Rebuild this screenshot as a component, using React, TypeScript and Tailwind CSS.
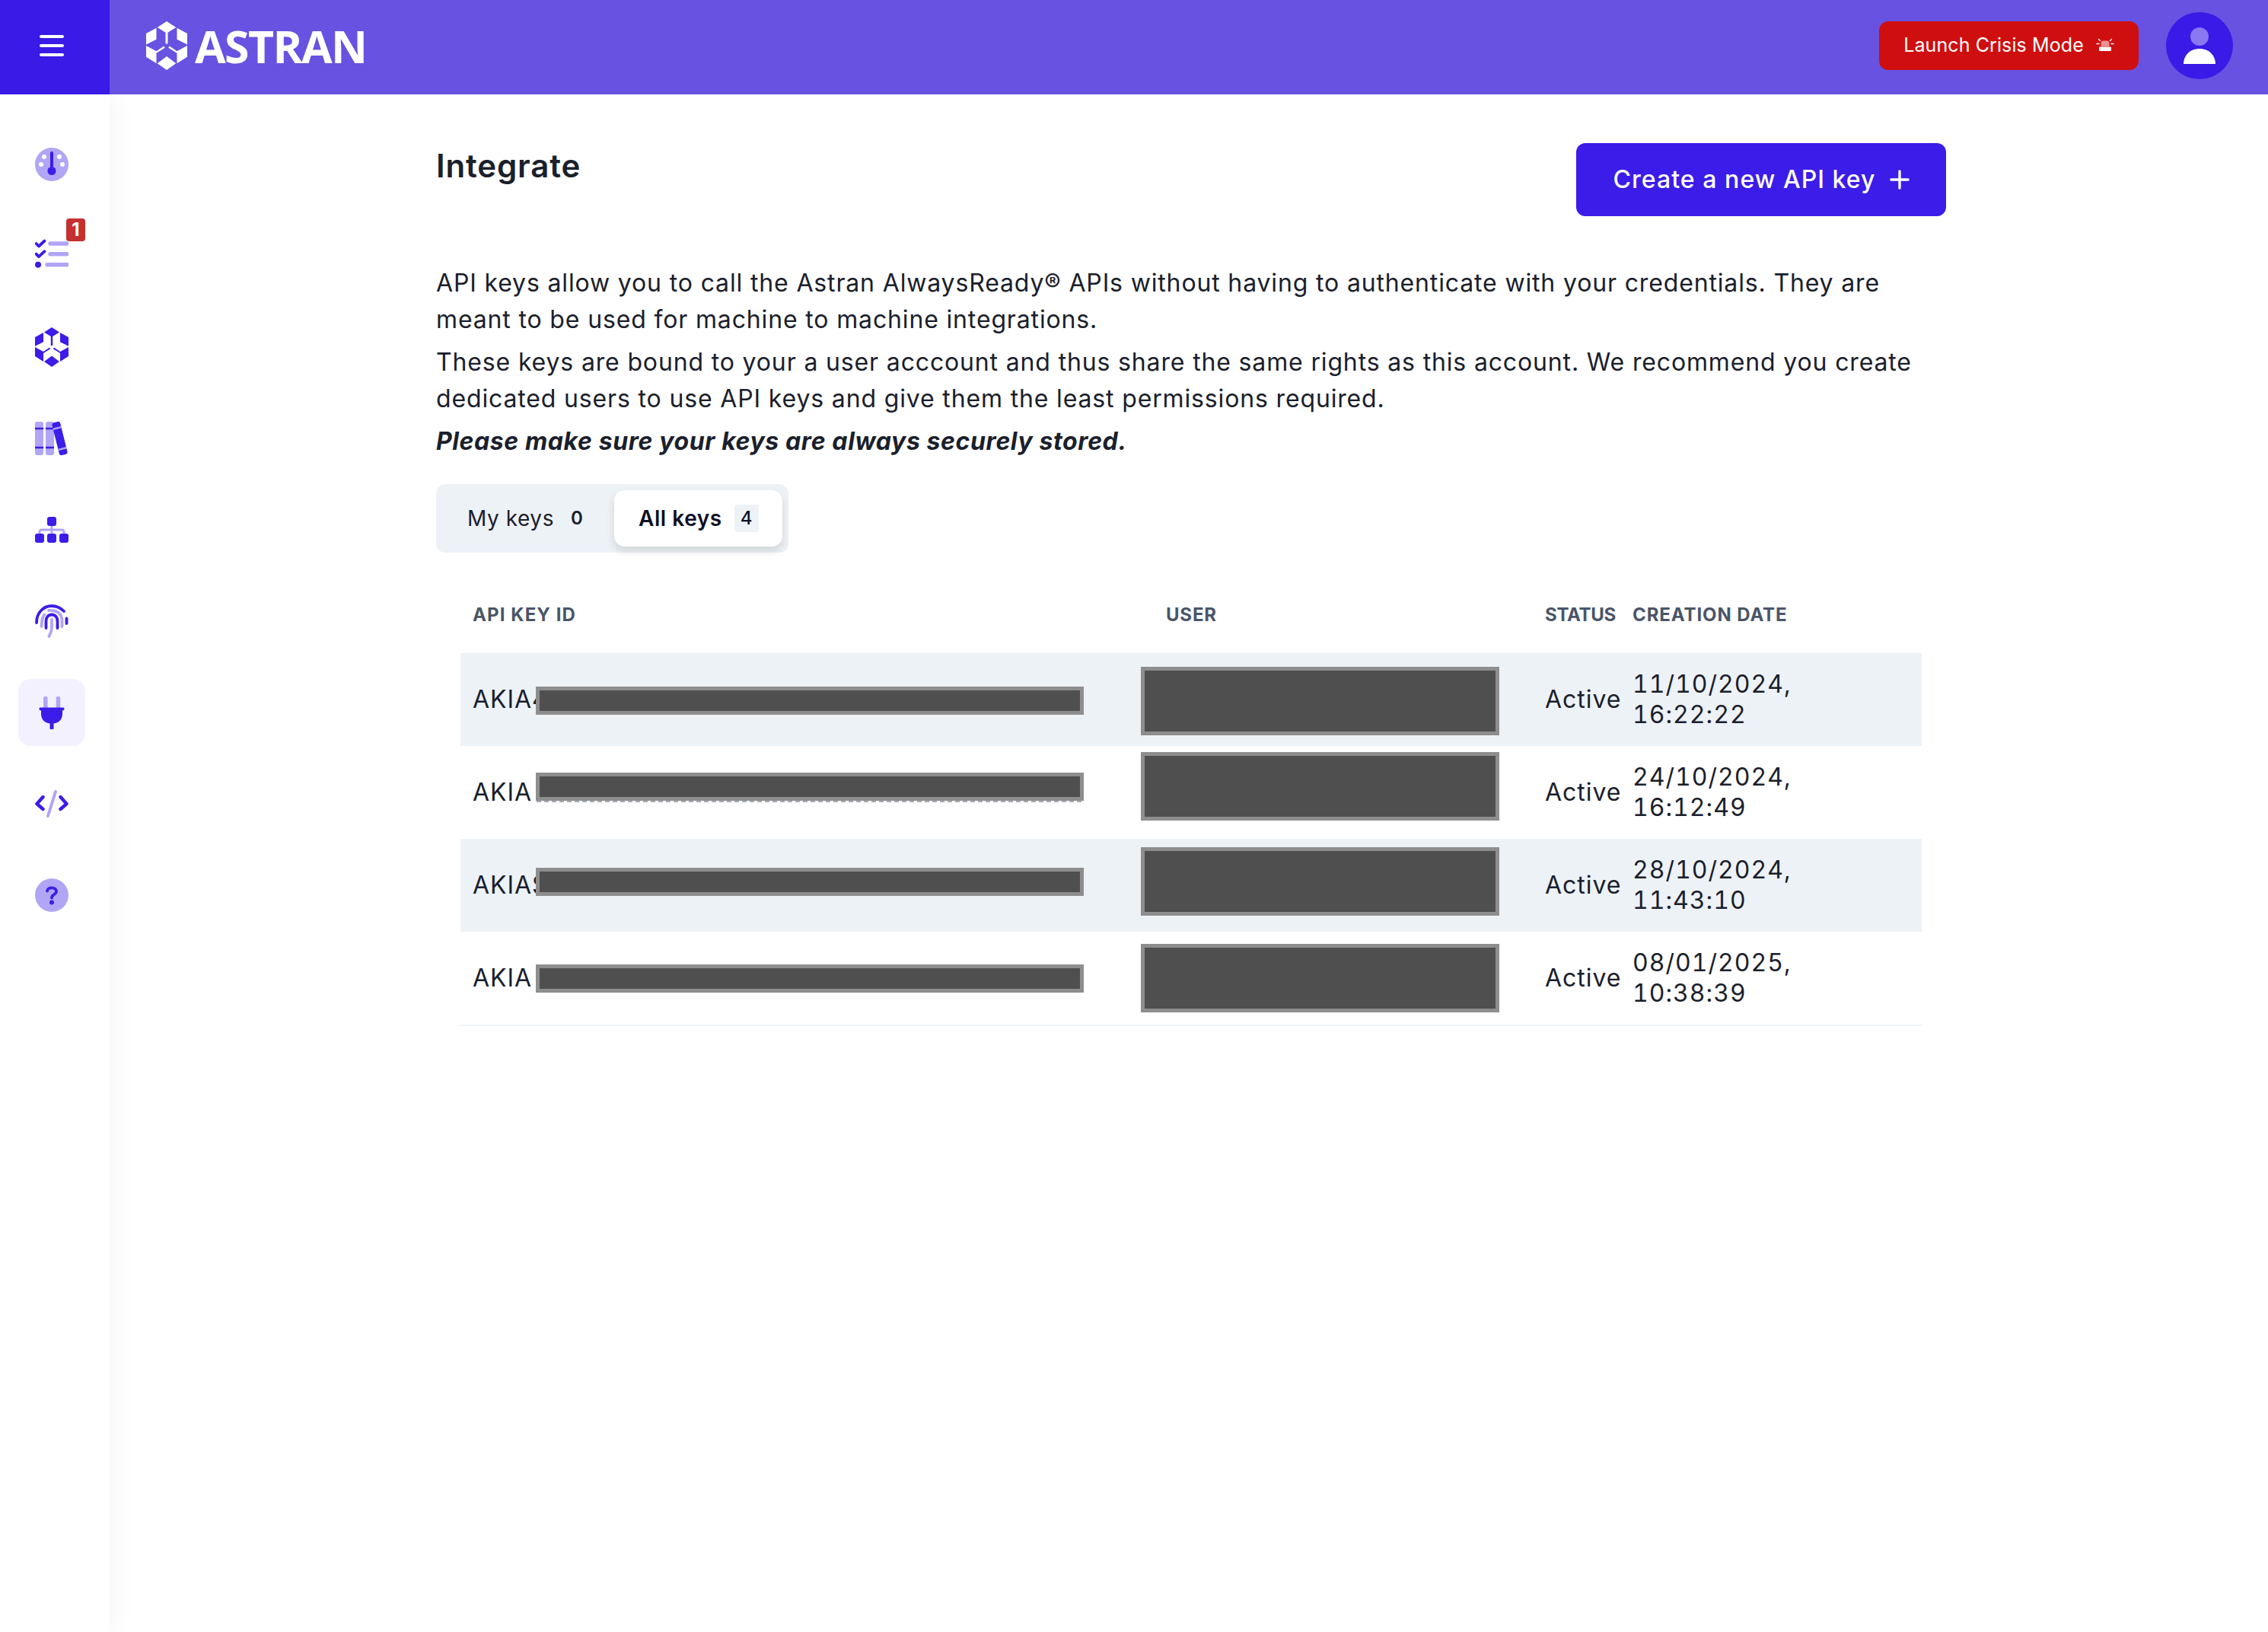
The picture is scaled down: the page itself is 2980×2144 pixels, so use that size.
import React from "react";

const D = "#3c1ce8";
const L = "#b1a5f6";

function Hex({ fill, className }: { fill: string; className: string }) {
  return (
    <svg viewBox="0 0 44 52" className={className} fill={fill}>
      <path d="M22 0L32 6.5L23.2 12V24H20.8V12L12 6.5Z" />
      <path d="M11 7V19.2L0 24.7V13Z" />
      <path d="M33 7V19.2L44 24.7V13Z" />
      <path d="M0 26L11 32L19 26.5L20.2 28.3L11 34V45L0 38Z" />
      <path d="M44 26L33 32L25 26.5L23.8 28.3L33 34V45L44 38Z" />
      <path d="M22 37.5L32 45L22 52L12 45Z" />
    </svg>
  );
}

const ic = "w-[44px] h-[44px]";

function Gauge() {
  return (
    <svg viewBox="0 0 44 44" className={ic}>
      <circle cx="22" cy="22" r="22" fill={L} />
      <circle cx="12" cy="12" r="3" fill="#fff" />
      <circle cx="32" cy="12" r="3" fill="#fff" />
      <circle cx="8" cy="22" r="3" fill="#fff" />
      <circle cx="36" cy="22" r="3" fill="#fff" />
      <path d="M22 7V28" stroke={D} strokeWidth="4" strokeLinecap="round" />
      <circle cx="22" cy="30.5" r="5.5" fill={D} />
    </svg>
  );
}
function Tasks() {
  return (
    <svg viewBox="0 0 44 44" className={ic} fill="none">
      <path d="M20 6H42M20 19.7H42M16 33.7H42" stroke={L} strokeWidth="5.5" strokeLinecap="round" />
      <path d="M1.5 6L5 9.5L12.5 2.5M1.5 19.7L5 23.2L12.5 16.2" stroke={D} strokeWidth="3.8" strokeLinecap="round" strokeLinejoin="round" />
      <circle cx="4" cy="33.7" r="4" fill={D} />
    </svg>
  );
}
function Books() {
  return (
    <svg viewBox="0 0 44 44" className={ic}>
      <rect x="0" y="0" width="11" height="44" rx="3" fill={L} />
      <rect x="14" y="0" width="11" height="44" rx="3" fill={L} />
      <path d="M0 9H11M0 34H11M14 9H25M14 34H25" stroke={D} strokeWidth="2.4" />
      <g transform="rotate(-14 32.5 22)">
        <rect x="27" y="0" width="11" height="44" rx="3" fill={D} />
        <path d="M27 8H38M27 36H38" stroke={L} strokeWidth="2.4" />
      </g>
    </svg>
  );
}
function Sitemap() {
  return (
    <svg viewBox="0 0 44 44" className={ic}>
      <path d="M6 28V25C6 23 7 22 9 22H35C37 22 38 23 38 25V28M22 16V28" stroke={L} strokeWidth="3" fill="none" />
      <rect x="16" y="5" width="12" height="12" rx="3" fill={D} />
      <rect x="0" y="27" width="12" height="12" rx="3" fill={D} />
      <rect x="16" y="27" width="12" height="12" rx="3" fill={D} />
      <rect x="32" y="27" width="12" height="12" rx="3" fill={D} />
    </svg>
  );
}
function Finger() {
  return (
    <svg viewBox="0 0 44 44" className={ic} fill="none" strokeLinecap="round" strokeWidth="3.8">
      <path d="M2 24C2 10 12 2 22 2C29 2 34 5 38 9" stroke={D} />
      <path d="M41.5 18.5V25" stroke={D} />
      <path d="M8.5 29C9 22 9 17 12.5 13.5" stroke={L} />
      <path d="M18 8C28 7 35.5 12 35.5 21V29" stroke={L} />
      <path d="M14.5 31V22C14.5 17 17.5 13.5 22 13.5C26.5 13.5 29.5 17 29.5 22V31" stroke={D} />
      <path d="M22 20V29C22 34 20.5 38 18.5 42" stroke={L} />
    </svg>
  );
}
function Plug() {
  return (
    <svg viewBox="0 0 44 44" className={ic}>
      <rect x="11" y="1" width="5.6" height="16" rx="2" fill={L} />
      <rect x="27.7" y="1" width="5.6" height="16" rx="2" fill={L} />
      <path d="M7 15.5H37C38 15.5 38.5 16.2 38.5 17C38.5 18 38 19.5 36 19.5V24C36 31 31 36 24.5 36.5V43C24.5 44 24 44 22 44C20 44 19.5 44 19.5 43V36.5C13 36 8 31 8 24V19.5C6 19.5 5.5 18 5.5 17C5.5 16.2 6 15.5 7 15.5Z" fill={D} />
    </svg>
  );
}
function Code() {
  return (
    <svg viewBox="0 0 44 44" className={ic} fill="none" strokeLinecap="round" strokeLinejoin="round">
      <path d="M27 6L17 38" stroke={L} strokeWidth="4" />
      <path d="M10.5 13L2.5 22L10.5 29M33.5 13L41.5 22L33.5 29" stroke={D} strokeWidth="4.4" />
    </svg>
  );
}
function Question() {
  return (
    <svg viewBox="0 0 44 44" className={ic}>
      <circle cx="22" cy="22" r="22" fill={L} />
      <path d="M16 16.5C16.5 11 28 11 28 17C28 21.5 22 20.5 22 25.5" fill="none" stroke={D} strokeWidth="3.8" strokeLinecap="round" />
      <circle cx="22" cy="31.5" r="3" fill={D} />
    </svg>
  );
}

function Nav({ active, badge, children }: { active?: boolean; badge?: boolean; children: React.ReactNode }) {
  return (
    <div className={`relative w-[88px] h-[88px] rounded-[16px] flex items-center justify-center ${active ? "bg-[#f3f1fe]" : ""}`}>
      {children}
      {badge && (
        <span className="absolute left-[63px] top-[-5px] w-[25px] h-[30px] rounded-[4px] bg-[#c53030] text-white text-[24px] leading-[30px] font-bold text-center">1</span>
      )}
    </div>
  );
}

function Siren() {
  return (
    <svg viewBox="0 0 24 20" className="w-[24px] h-[20px]">
      <path d="M6.5 11V6.5C6.5 4.5 8 3.5 9.5 3.5H14.5C16 3.5 17.5 4.5 17.5 6.5V11Z" fill="#ee8f8f" />
      <rect x="4" y="11.5" width="16" height="5.5" rx="1.2" fill="#fff" />
      <path d="M1 7.5H4M20 7.5H23M3.5 1.5L5.5 3.5M20.5 1.5L18.5 3.5" stroke="#fff" strokeWidth="1.3" strokeLinecap="round" />
    </svg>
  );
}

function Redact({ className }: { className: string }) {
  return <div className={`absolute border-[5px] border-[#8e8e8e] bg-[#4f4f4f] ${className}`} />;
}

const rows = [
  { id: "AKIA4", d: "11/10/2024,", t: "16:22:22", bg: "bg-[#edf2f7]", key: "top-[44px]", user: "top-[18px]" },
  { id: "AKIA", d: "24/10/2024,", t: "16:12:49", bg: "", key: "top-[35px]", user: "top-[8px]" },
  { id: "AKIAS", d: "28/10/2024,", t: "11:43:10", bg: "bg-[#edf2f7]", key: "top-[38px]", user: "top-[11px]" },
  { id: "AKIA", d: "08/01/2025,", t: "10:38:39", bg: "", key: "top-[43px]", user: "top-[16px]" },
];

const grid = "grid grid-cols-[911px_498px_115px_396px] items-center";
const th = "pl-[16px] text-[24px] leading-[32px] font-bold text-[#4a5568] whitespace-nowrap";

export default function App() {
  return (
    <div className="min-h-screen flex flex-col bg-white text-[#1a202c] [font-family:Inter,'Liberation_Sans',sans-serif]">
      <header className="h-[124px] flex bg-[#6752e2] relative z-10">
        <button className="w-[144px] h-[124px] bg-[#3a1ae6] flex flex-col items-center justify-center gap-[8px] pr-[8px] pb-[4px]">
          <span className="block w-[32px] h-[4px] rounded-full bg-white" />
          <span className="block w-[32px] h-[4px] rounded-full bg-white" />
          <span className="block w-[32px] h-[4px] rounded-full bg-white" />
        </button>
        <div className="ml-[48px] flex items-center gap-[10px] pb-[4px]">
          <Hex fill="#fff" className="w-[54px] h-[64px]" />
          <span className="text-[59px] leading-[64px] font-bold text-white [font-family:'Open_Sans',sans-serif] tracking-[-1.6px]">ASTRAN</span>
        </div>
        <div className="ml-auto flex items-center mr-[46px] pb-[4px]">
          <button className="w-[341px] h-[64px] rounded-[12px] bg-[#cf0f0f] text-white flex items-center justify-center gap-[16px] text-[25px] tracking-[0.1px]">
            <span>Launch Crisis Mode</span>
            <Siren />
          </button>
          <div className="ml-[36px] w-[88px] h-[88px] rounded-full bg-[#3a1ae6] flex flex-col items-center">
            <span className="mt-[20px] w-[24px] h-[24px] rounded-full bg-[#8a77f2]" />
            <span className="mt-[4px] w-[42px] h-[20px] rounded-t-[21px] bg-white" />
          </div>
        </div>
      </header>
      <div className="flex flex-1">
        <aside className="w-[144px] shrink-0 bg-white shadow-[0_0_36px_rgba(0,0,0,0.06)] pt-[48px] flex flex-col items-center gap-[32px] pr-[8px]">
          <Nav><Gauge /></Nav>
          <Nav badge><Tasks /></Nav>
          <Nav><Hex fill={D} className="w-[44px] h-[52px]" /></Nav>
          <Nav><Books /></Nav>
          <Nav><Sitemap /></Nav>
          <Nav><Finger /></Nav>
          <Nav active><Plug /></Nav>
          <Nav><Code /></Nav>
          <Nav><Question /></Nav>
        </aside>
        <main className="ml-[429px] w-[1984px]">
          <div className="flex items-start justify-between pt-[64px]">
            <h1 className="text-[42px] leading-[60px] font-semibold tracking-[0.02em]">Integrate</h1>
            <button className="w-[486px] h-[96px] rounded-[12px] bg-[#3c1ce8] text-white text-[32px] font-medium tracking-[0.033em] flex items-center justify-center gap-[18px]">
              <span>Create a new API key</span>
              <svg viewBox="0 0 28 28" className="w-[26px] h-[26px]"><path d="M14 2V26M2 14H26" stroke="#fff" strokeWidth="3.6" strokeLinecap="round" /></svg>
            </button>
          </div>
          <div className="mt-[64px] text-[32px] leading-[48px] tracking-[0.85px] whitespace-nowrap">
            <p>API keys allow you to call the Astran AlwaysReady® APIs without having to authenticate with your credentials. They are<br />meant to be used for machine to machine integrations.</p>
            <p className="mt-[8px]">These keys are bound to your a user acccount and thus share the same rights as this account. We recommend you create<br />dedicated users to use API keys and give them the least permissions required.</p>
            <p className="mt-[8px] italic font-bold tracking-[0.6px]">Please make sure your keys are always securely stored.</p>
          </div>
          <div className="mt-[32px] w-[463px] h-[90px] rounded-[12px] bg-[#edf2f7] flex items-center pl-[41px] pr-[8px] text-[28px] tracking-[0.02em]">
            <span className="w-[112px] whitespace-nowrap">My keys</span>
            <span className="ml-[24px] w-[16px] font-semibold text-[24px]">0</span>
            <div className="ml-[41px] w-[222px] h-[74px] rounded-[14px] bg-white shadow-[0_6px_12px_rgba(0,0,0,0.12)] flex items-center pl-[32px] font-semibold text-[#0f1026]">
              <span className="w-[110px] whitespace-nowrap">All keys</span>
              <span className="ml-[16px] w-[32px] h-[36px] rounded-[4px] bg-[#edf2f7] text-[24px] font-medium leading-[36px] text-center">4</span>
            </div>
          </div>
          <div className="mx-[32px]">
            <div className={`${grid} mt-[32px] h-[100px]`}>
              <div className={`${th} tracking-[1.1px]`}>API KEY ID</div>
              <div className={`${th} tracking-[0.8px]`}>USER</div>
              <div className={`${th} tracking-[-0.3px]`}>STATUS</div>
              <div className={`${th} tracking-[0.9px]`}>CREATION DATE</div>
            </div>
            {rows.map((r, i) => (
              <div key={i} className={`${grid} relative text-[32px] tracking-[0.03em] ${r.bg} ${i === 3 ? "border-b-[2px] border-[#edf2f7] h-[124px]" : "h-[122px]"}`}>
                <div className="pl-[16px] whitespace-nowrap">{r.id}</div>
                <div />
                <div className="pl-[16px] whitespace-nowrap">Active</div>
                <div className="pl-[16px] leading-[40px] tabular-nums tracking-[1px]">
                  <div className="whitespace-nowrap">{r.d}</div>
                  <div className="whitespace-nowrap">{r.t}</div>
                </div>
                {i === 1 && <div className="absolute left-[100px] top-[72px] w-[716px] h-0 border-b-[2px] border-dashed border-[#a8acb2]" />}
                <Redact className={`left-[99px] w-[720px] h-[37px] ${r.key}`} />
                <Redact className={`left-[894px] w-[471px] h-[90px] ${r.user}`} />
              </div>
            ))}
          </div>
        </main>
      </div>
    </div>
  );
}
